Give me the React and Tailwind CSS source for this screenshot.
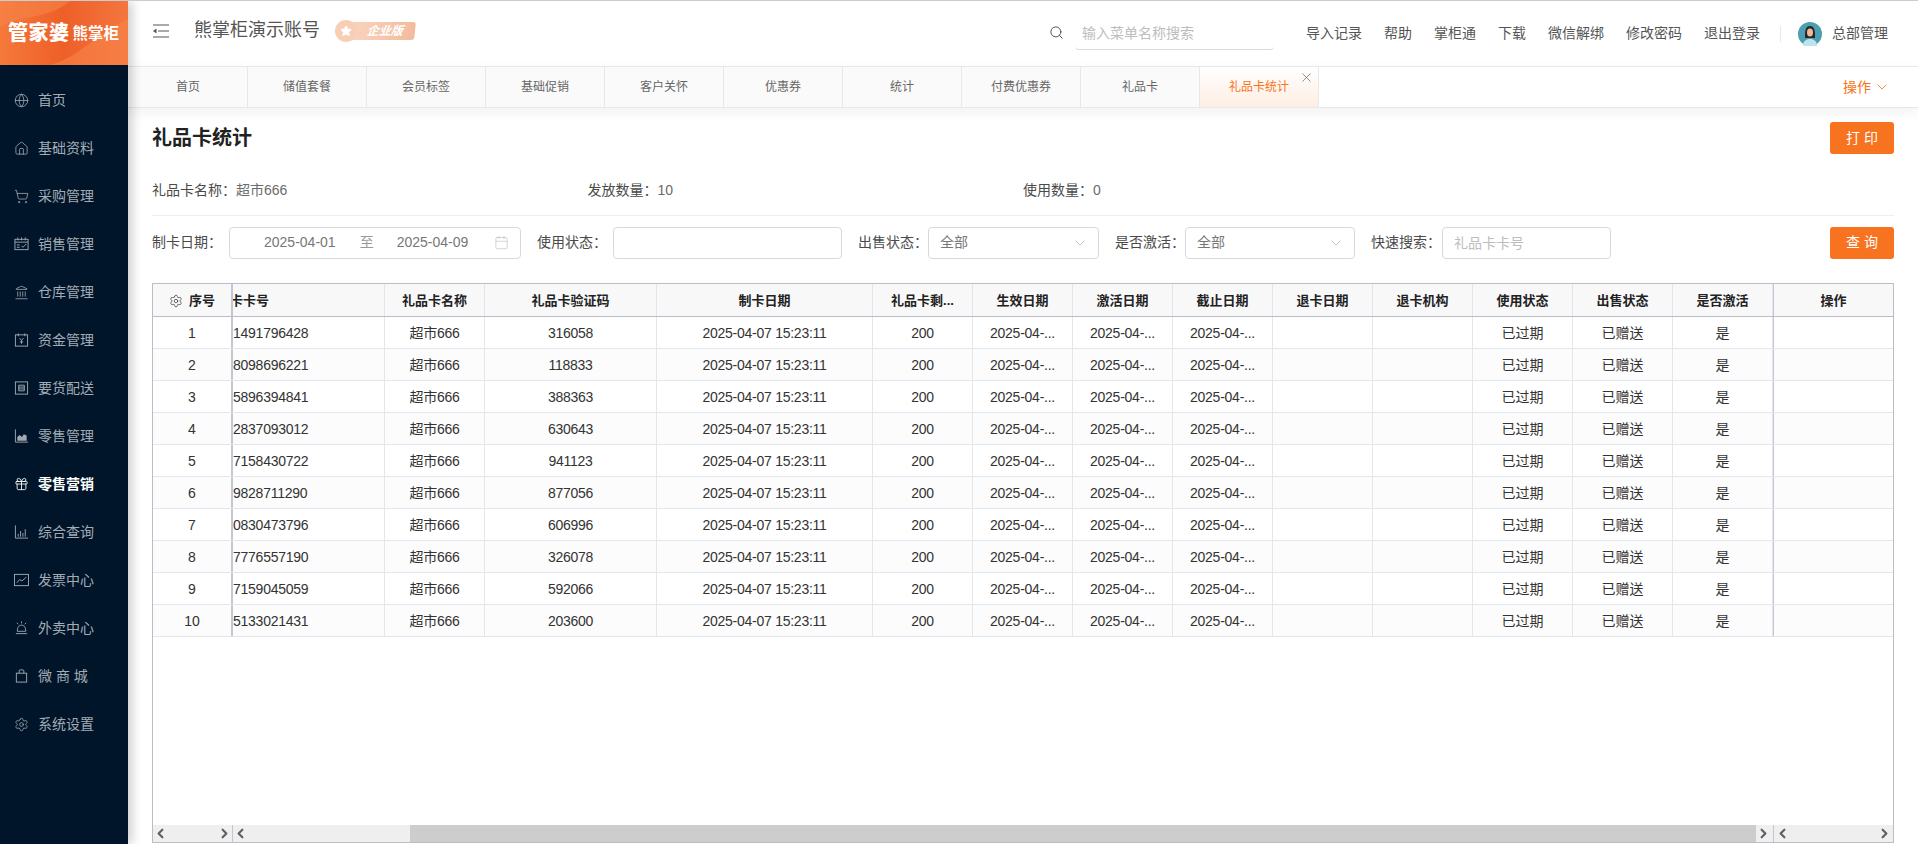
import { Search, ChevronDown, ChevronLeft, ChevronRight, X, Star, Globe, Home, ShoppingCart, Landmark, Gift, Settings, Calendar } from 'lucide-react';

const svgProps = {
  width: 16,
  height: 16,
  viewBox: '0 0 16 16',
  fill: 'none',
  stroke: 'currentColor',
  strokeWidth: 1,
};

function SalesIcon() {
  return (
    <svg {...svgProps}>
      <rect x="1" y="3" width="14" height="11" />
      <path d="M1 6h14M4 1v3M8 1v3M12 1v3M3 9h3M3 11.5h3M8 10l1.5 1.5L13 8" />
    </svg>
  );
}

function MoneyIcon() {
  return (
    <svg {...svgProps}>
      <rect x="1.5" y="2.5" width="13" height="12" />
      <path d="M4.5 1v3M11.5 1v3M6 6l2 2.5L10 6M8 8.5V12M6.2 10h3.6" />
    </svg>
  );
}

function ListBoxIcon() {
  return (
    <svg {...svgProps}>
      <rect x="1.5" y="1.5" width="13" height="13" />
      <path d="M5 5h6v6H5zM5 7h6M5 9h6" />
    </svg>
  );
}

function AreaIcon() {
  return (
    <svg {...svgProps}>
      <path d="M1.5 1v13.5H15" />
      <path d="M3.5 13V9l2.5-2 2.5 2 2-3 3 1.5V13z" fill="currentColor" stroke="none" />
    </svg>
  );
}

function BarsIcon() {
  return (
    <svg {...svgProps}>
      <path d="M1.5 1v13.5H15M4.5 13v-3M7 13V7M9.5 13V9M12 13V5" />
    </svg>
  );
}

function InvoiceIcon() {
  return (
    <svg {...svgProps}>
      <rect x="0.5" y="2" width="15" height="12" />
      <path d="M3 11l3-3.5 2.5 1.5L13 5" />
    </svg>
  );
}

function BellIcon() {
  return (
    <svg {...svgProps}>
      <path d="M3.5 11.5c0-4 1.5-6.5 4.5-6.5s4.500 2.500 4.500 6.500M2 14h12M3.500 11.500h9M8 1v2M3 2.500l1.500 1.500M13 2.500L11.500 4" />
    </svg>
  );
}

function BagIcon() {
  return (
    <svg {...svgProps}>
      <rect x="2.500" y="5" width="11" height="9.500" />
      <path d="M5.500 5V2.500a1 1 0 0 1 1-1h3a1 1 0 0 1 1 1V5" />
    </svg>
  );
}

const MENU = [
  { label: '首页', icon: <Globe size={15} strokeWidth={1.3} /> },
  { label: '基础资料', icon: <Home size={15} strokeWidth={1.3} /> },
  { label: '采购管理', icon: <ShoppingCart size={15} strokeWidth={1.3} /> },
  { label: '销售管理', icon: <SalesIcon /> },
  { label: '仓库管理', icon: <Landmark size={15} strokeWidth={1.3} /> },
  { label: '资金管理', icon: <MoneyIcon /> },
  { label: '要货配送', icon: <ListBoxIcon /> },
  { label: '零售管理', icon: <AreaIcon /> },
  { label: '零售营销', icon: <Gift size={16} strokeWidth={1.4} />, active: true },
  { label: '综合查询', icon: <BarsIcon /> },
  { label: '发票中心', icon: <InvoiceIcon /> },
  { label: '外卖中心', icon: <BellIcon /> },
  { label: '微 商 城', icon: <BagIcon /> },
  { label: '系统设置', icon: <Settings size={15} strokeWidth={1.3} /> },
];

const TOP_LINKS = ['导入记录', '帮助', '掌柜通', '下载', '微信解绑', '修改密码', '退出登录'];

const TABS = ['首页', '储值套餐', '会员标签', '基础促销', '客户关怀', '优惠券', '统计', '付费优惠券', '礼品卡'];

const COLUMNS = [
  { title: '礼品卡名称', width: 'w-[100px]', key: 'name', num: true },
  { title: '礼品卡验证码', width: 'w-[172px]', key: 'code', num: true },
  { title: '制卡日期', width: 'w-[216px]', key: 'made', num: true },
  { title: '礼品卡剩...', width: 'w-[100px]', key: 'left', num: true },
  { title: '生效日期', width: 'w-[100px]', key: 'short', num: true },
  { title: '激活日期', width: 'w-[100px]', key: 'short', num: true },
  { title: '截止日期', width: 'w-[100px]', key: 'short', num: true },
  { title: '退卡日期', width: 'w-[100px]', key: 'none' },
  { title: '退卡机构', width: 'w-[100px]', key: 'none' },
  { title: '使用状态', width: 'w-[100px]', key: 'used' },
  { title: '出售状态', width: 'w-[100px]', key: 'sold' },
  { title: '是否激活', width: 'w-[100px]', key: 'on' },
];

const ROWS = [
  ['1491796428', '316058'],
  ['8098696221', '118833'],
  ['5896394841', '388363'],
  ['2837093012', '630643'],
  ['7158430722', '941123'],
  ['9828711290', '877056'],
  ['0830473796', '606996'],
  ['7776557190', '326078'],
  ['7159045059', '592066'],
  ['5133021431', '203600'],
].map(([card, code], i) => ({
  no: i + 1,
  card,
  code,
  name: '超市666',
  made: '2025-04-07 15:23:11',
  short: '2025-04-...',
  left: '200',
  none: '',
  used: '已过期',
  sold: '已赠送',
  on: '是',
}));

function Logo() {
  return (
    <div className="relative flex h-[64px] items-center overflow-hidden bg-gradient-to-r from-[#f5793a] via-[#ee5f28] to-[#f4763e] pl-[8px] text-white">
      <svg className="absolute inset-0" width="128" height="64" viewBox="0 0 128 64" fill="none">
        <path d="M0 0h70C50 18 20 14 0 26z" fill="#f6844a" opacity="0.6" />
        <path d="M128 18C100 30 80 56 50 64h78z" fill="#f6844a" opacity="0.6" />
      </svg>
      <span className="relative text-[20px] leading-none font-black tracking-[0.5px]">管家婆</span>
      <span className="relative mt-[2px] ml-[3px] text-[15.5px] leading-none font-bold">熊掌柜</span>
    </div>
  );
}

function Sidebar() {
  return (
    <aside className="relative z-20 flex w-[128px] shrink-0 flex-col bg-[#001529] shadow-[4px_0_10px_rgba(0,0,0,0.2)]">
      <Logo />
      <nav className="pt-[11px]">
        {MENU.map((item) => (
          <div
            key={item.label}
            className={`flex h-[48px] items-center gap-[9px] pl-[14px] text-[14px] ${
              item.active ? 'font-bold text-white' : 'text-[#a3abb4]'
            }`}
          >
            <span className={`flex w-[15px] justify-center ${item.active ? 'text-white' : 'text-[#a0a8b2]'}`}>{item.icon}</span>
            <span className="whitespace-pre">{item.label}</span>
          </div>
        ))}
      </nav>
    </aside>
  );
}

function Avatar() {
  return (
    <svg width="24" height="24" viewBox="0 0 24 24">
      <circle cx="12" cy="12" r="12" fill="#4b9fb0" />
      <path d="M7 13c0-6 1.500-9 5-9s5 3 5 9v3H7z" fill="#2b2526" />
      <ellipse cx="12" cy="10.500" rx="3" ry="4" fill="#eebc9d" />
      <path d="M5 24c0-5 3-7 7-7s7 2 7 7z" fill="#bfe3ea" />
    </svg>
  );
}

function TopBar() {
  return (
    <header className="flex h-[65px] shrink-0 items-center bg-white pr-[30px] pl-[25px]">
      <svg width="16" height="14" viewBox="0 0 16 14" fill="none" className="mb-[6px] text-[#555]">
        <path d="M0 1h16M5 7h11M0 13h16" stroke="currentColor" strokeWidth="1.200" />
        <path d="M3.500 4.500v5L0 7z" fill="currentColor" />
      </svg>
      <span className="mb-[6px] ml-[25px] text-[18px] text-[#555]">熊掌柜演示账号</span>
      <div className="mb-[6px] ml-[15px] flex items-center">
        <span className="z-10 flex h-[22px] w-[22px] items-center justify-center rounded-full bg-[#f8cfb5]">
          <Star size={12} fill="#fff" stroke="#fff" />
        </span>
        <span className="-ml-[10px] flex h-[18px] w-[68px] -skew-x-6 items-center justify-center rounded-r-[3px] bg-gradient-to-r from-[#f9d6c1] to-[#f3bb9d] pl-[8px] text-[12px] font-bold text-white italic">
          企业版
        </span>
      </div>

      <Search size={15} strokeWidth={1.6} className="mb-[2px] ml-auto text-[#555]" />
      <input
        readOnly
        placeholder="输入菜单名称搜索"
        className="ml-[11px] h-[32px] w-[199px] rounded-b-[4px] border-b border-[#d9d9d9] px-[7px] text-[14px] outline-none placeholder:text-[#bdbdbd]"
      />
      <div className="ml-[32px] flex items-center gap-[22px] text-[14px] text-[#555]">
        {TOP_LINKS.map((link) => (
          <span key={link}>{link}</span>
        ))}
      </div>
      <span className="ml-[20px] h-[16px] w-px bg-[#e8e8e8]" />
      <span className="ml-[17px] flex items-center gap-[10px] text-[14px] text-[#555]">
        <Avatar />
        总部管理
      </span>
    </header>
  );
}

function TabBar() {
  return (
    <div className="relative z-10 flex h-[42px] shrink-0 items-stretch border-y border-[#e8e8e8] bg-white pl-px shadow-[0_4px_12px_rgba(0,0,0,0.06)]">
      {TABS.map((tab) => (
        <div key={tab} className="flex w-[119px] items-center justify-center border-r border-[#e8e8e8] bg-[#fafafa] text-[12px] text-[#666]">
          {tab}
        </div>
      ))}
      <div className="relative flex w-[119px] items-center justify-center border-r border-[#e8e8e8] bg-gradient-to-b from-white to-[#fdeee3] text-[12px] text-[#f97316]">
        礼品卡统计
        <X size={15} strokeWidth={1} className="absolute top-[3px] right-[4px] text-[#555]" />
      </div>
      <div className="mr-[28px] ml-auto flex items-center gap-[3px] text-[14px] text-[#f97316]">
        操作
        <ChevronDown size={16} strokeWidth={1.200} />
      </div>
    </div>
  );
}

function Info({ label, value }) {
  return (
    <div className="w-1/4 text-[14px] text-[#4a4a4a]">
      {label}：<span className="text-[#6b6b6b]">{value}</span>
    </div>
  );
}

function OrangeButton({ children }) {
  return (
    <button type="button" className="h-[32px] w-[64px] rounded-[3px] bg-[#f7731f] text-[14px] whitespace-pre text-white">
      {children}
    </button>
  );
}

function Field({ label, labelWidth, children }) {
  return (
    <div className="flex items-center">
      <span className={`text-[14px] text-[#4a4a4a] ${labelWidth}`}>{label}：</span>
      {children}
    </div>
  );
}

function SelectBox({ width }) {
  return (
    <div className={`flex h-[32px] items-center justify-between rounded-[4px] border border-[#d9d9d9] pr-[10px] pl-[11px] text-[14px] text-[#777] ${width}`}>
      全部
      <ChevronDown size={16} strokeWidth={1} className="text-[#aaa]" />
    </div>
  );
}

function Filters() {
  return (
    <div className="mt-[10px] flex h-[33px] items-center gap-[16px]">
      <Field label="制卡日期" labelWidth="w-[77px]">
        <div className="flex h-[32px] w-[292px] items-center rounded-[4px] border border-[#d9d9d9] pl-[34px] text-[14px] text-[#777]">
          <span>2025-04-01</span>
          <span className="ml-[24px] text-[#999]">至</span>
          <span className="ml-[23px]">2025-04-09</span>
          <Calendar size={15} strokeWidth={1} className="ml-[26px] text-[#bbb]" />
        </div>
      </Field>
      <Field label="使用状态" labelWidth="w-[76px]">
        <input readOnly className="h-[32px] w-[229px] rounded-[4px] border border-[#d9d9d9] outline-none" />
      </Field>
      <Field label="出售状态" labelWidth="w-[70px]">
        <SelectBox width="w-[171px]" />
      </Field>
      <Field label="是否激活" labelWidth="w-[70px]">
        <SelectBox width="w-[170px]" />
      </Field>
      <Field label="快速搜索" labelWidth="w-[71px]">
        <input
          readOnly
          placeholder="礼品卡卡号"
          className="h-[32px] w-[169px] rounded-[4px] border border-[#d9d9d9] px-[11px] text-[14px] outline-none placeholder:text-[#bdbdbd]"
        />
      </Field>
      <div className="ml-auto">
        <OrangeButton>查 询</OrangeButton>
      </div>
    </div>
  );
}

function ScrollArrow({ dir }) {
  const Icon = dir === 'left' ? ChevronLeft : ChevronRight;
  return <Icon size={15} strokeWidth={3.500} className="text-[#606060]" />;
}

function DataTable() {
  return (
    <div className="mt-[24px] flex min-h-0 flex-1 flex-col border border-[#b9bcc9] text-[14px] text-[#333]">
      <div className="flex h-[33px] shrink-0 items-center border-b border-[#b9bcc9] bg-[#f8f8f9] text-[13px] font-bold text-[#222]">
        <div className="flex h-full w-[80px] shrink-0 items-center justify-center gap-[6px] border-r-2 border-[#c4c6d1] pt-px">
          <Settings size={14} strokeWidth={1.300} className="text-[#444]" />
          序号
        </div>
        <div className="flex h-full w-[152px] shrink-0 items-center overflow-hidden border-r border-[#e4e6ec] pt-px whitespace-nowrap">
          <span className="-ml-[3px]">卡卡号</span>
        </div>
        {COLUMNS.map((col) => (
          <div key={col.title} className={`flex h-full shrink-0 items-center justify-center border-r border-[#e4e6ec] pt-px ${col.width}`}>
            {col.title}
          </div>
        ))}
        <div className="flex h-full flex-1 items-center justify-center border-l border-[#c4c6d1] pt-px">操作</div>
      </div>

      <div className="min-h-0 flex-1">
        {ROWS.map((row) => (
          <div key={row.no} className={`flex h-[32px] items-center border-b border-[#e4e6ef] ${row.no % 2 === 0 ? 'bg-[#fcfcfc]' : 'bg-white'}`}>
            <div className="flex h-full w-[80px] shrink-0 items-center justify-center border-r-2 border-[#c4c6d1] pt-px">{row.no}</div>
            <div className="flex h-full w-[152px] shrink-0 items-center border-r border-[#e4e6ec] pt-px tracking-[-0.25px]">{row.card}</div>
            {COLUMNS.map((col) => (
              <div
                key={col.title}
                className={`flex h-full shrink-0 items-center justify-center border-r border-[#e4e6ec] pt-px ${col.width} ${col.num ? 'tracking-[-0.25px]' : ''}`}
              >
                {row[col.key]}
              </div>
            ))}
            <div className="h-full flex-1 border-l border-[#c4c6d1]" />
          </div>
        ))}
      </div>

      <div className="flex h-[17px] shrink-0 items-center bg-[#efefef]">
        <div className="flex h-full w-[80px] shrink-0 items-center justify-between border-r border-[#c4c6d1]">
          <ScrollArrow dir="left" />
          <ScrollArrow dir="right" />
        </div>
        <div className="flex h-full w-[177px] shrink-0 items-center">
          <ScrollArrow dir="left" />
        </div>
        <div className="h-full w-[1346px] shrink-0 bg-[#cdcdcd]" />
        <div className="flex h-full flex-1 items-center">
          <ScrollArrow dir="right" />
        </div>
        <div className="flex h-full w-[120px] shrink-0 items-center justify-between border-l border-[#c4c6d1] px-px">
          <ScrollArrow dir="left" />
          <ScrollArrow dir="right" />
        </div>
      </div>
    </div>
  );
}

export default function App() {
  return (
    <div className="flex h-screen w-full overflow-hidden border-t border-[#cccccc] bg-white font-['Liberation_Sans','Noto_Sans_CJK_SC',sans-serif]">
      <Sidebar />
      <main className="flex min-w-0 flex-1 flex-col">
        <TopBar />
        <TabBar />
        <section className="flex min-h-0 flex-1 flex-col pt-[14px] pr-[24px] pb-[1px] pl-[24px]">
          <div className="flex items-center justify-between">
            <h1 className="text-[20px] font-bold text-[#222]">礼品卡统计</h1>
            <OrangeButton>打 印</OrangeButton>
          </div>
          <div className="mt-[26px] flex h-[20px] items-center">
            <Info label="礼品卡名称" value="超市666" />
            <Info label="发放数量" value="10" />
            <Info label="使用数量" value="0" />
          </div>
          <div className="mt-[15px] h-px bg-[#eeeeee]" />
          <Filters />
          <DataTable />
        </section>
      </main>
    </div>
  );
}
